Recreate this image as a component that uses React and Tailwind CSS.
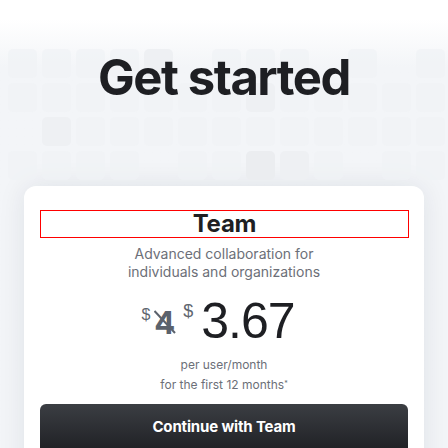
import React from "react";

const shades = [
  [1, 1, 1, 1, 2, 0, 1, 1, 1, 0, 1, 0, 1],
  [1, 1, 1, 1, 1, 1, 1, 2, 1, 1, 1, 1, 1],
  [0, 2, 1, 1, 1, 1, 1, 1, 1, 1, 1, 1, 1],
  [1, 1, 1, 1, 0, 1, 1, 3, 2, 1, 0, 1, 1],
];

const tone = ["bg-transparent", "bg-[#eff2f5]/70", "bg-[#eef0f3]", "bg-[#ebedf0]"];

function Grid() {
  return (
    <div className="absolute left-2 top-[49px] grid grid-cols-[repeat(13,29px)] gap-x-[5px] gap-y-[5px]">
      {shades.flat().map((s, i) => (
        <div key={i} className={`h-[29px] w-[29px] rounded-[5px] ${tone[s]}`} />
      ))}
    </div>
  );
}

const arial = { fontFamily: "'Liberation Sans', Arial, sans-serif" };

export default function App() {
  return (
    <div
      className="min-h-screen overflow-hidden bg-gradient-to-b from-white from-[4%] to-[#f3f5f8] to-[14%]"
      style={{ fontFamily: "Inter, 'Noto Sans', sans-serif" }}
    >
      {/* header */}
      <section className="relative h-[186px]">
        <Grid />
        <h1 className="relative pt-[48px] text-center text-[49px] font-bold leading-[60px] tracking-[-0.03em] text-[#1e1f23]">
          Get started
        </h1>
      </section>

      {/* plan card */}
      <div className="mx-6 rounded-t-[12px] bg-white px-4 pt-6 pb-6 shadow-[0_0_28px_rgba(20,30,50,0.09)]">
        <div className="mx-auto w-[369px] border border-[#ff0000] text-center text-[24px] font-bold leading-[26px] tracking-[-0.01em] text-[#1e1f23]">
          Team
        </div>

        <p className="mx-auto mt-[7px] w-[230px] text-center text-[14px] leading-[18px] text-[#6c6f78]">
          Advanced collaboration for individuals and organizations
        </p>

        {/* price */}
        <div className="mt-[17px] flex items-start justify-center pr-[12px]">
          <span className="mt-[9px] text-[16px] leading-none text-[#5f6670]" style={arial}>$</span>
          <span className="relative ml-[4px] mt-[9px] text-[31px] font-bold leading-none text-[#5b626c]">
            4
            <svg className="absolute left-0 top-[3px]" width="24" height="24" viewBox="0 0 24 24">
              <line x1="0.5" y1="1" x2="21" y2="23" stroke="#5b626c" strokeWidth="2" />
            </svg>
          </span>
          <span className="ml-[8px] mt-[4px] text-[18px] leading-none text-[#5f6670]" style={arial}>$</span>
          <span className="ml-[8px] text-[50px] leading-[46px] tracking-[-0.02em] text-[#1e1f23]" style={arial}>3.67</span>
        </div>

        <p className="mt-[12px] text-center text-[12px] leading-[18px] text-[#6c6f78]">per user/month</p>
        <p className="mt-[2px] text-center text-[12px] leading-[18px] text-[#6c6f78]">
          for the first 12 months<sup className="text-[7px]">*</sup>
        </p>

        <button className="mt-[10px] h-[52px] w-full rounded-[6px] bg-gradient-to-b from-[#3b3e43] to-[#1d1e22] pb-[6px] text-[15px] font-bold tracking-[-0.01em] text-white">
          Continue with Team
        </button>
      </div>
    </div>
  );
}
